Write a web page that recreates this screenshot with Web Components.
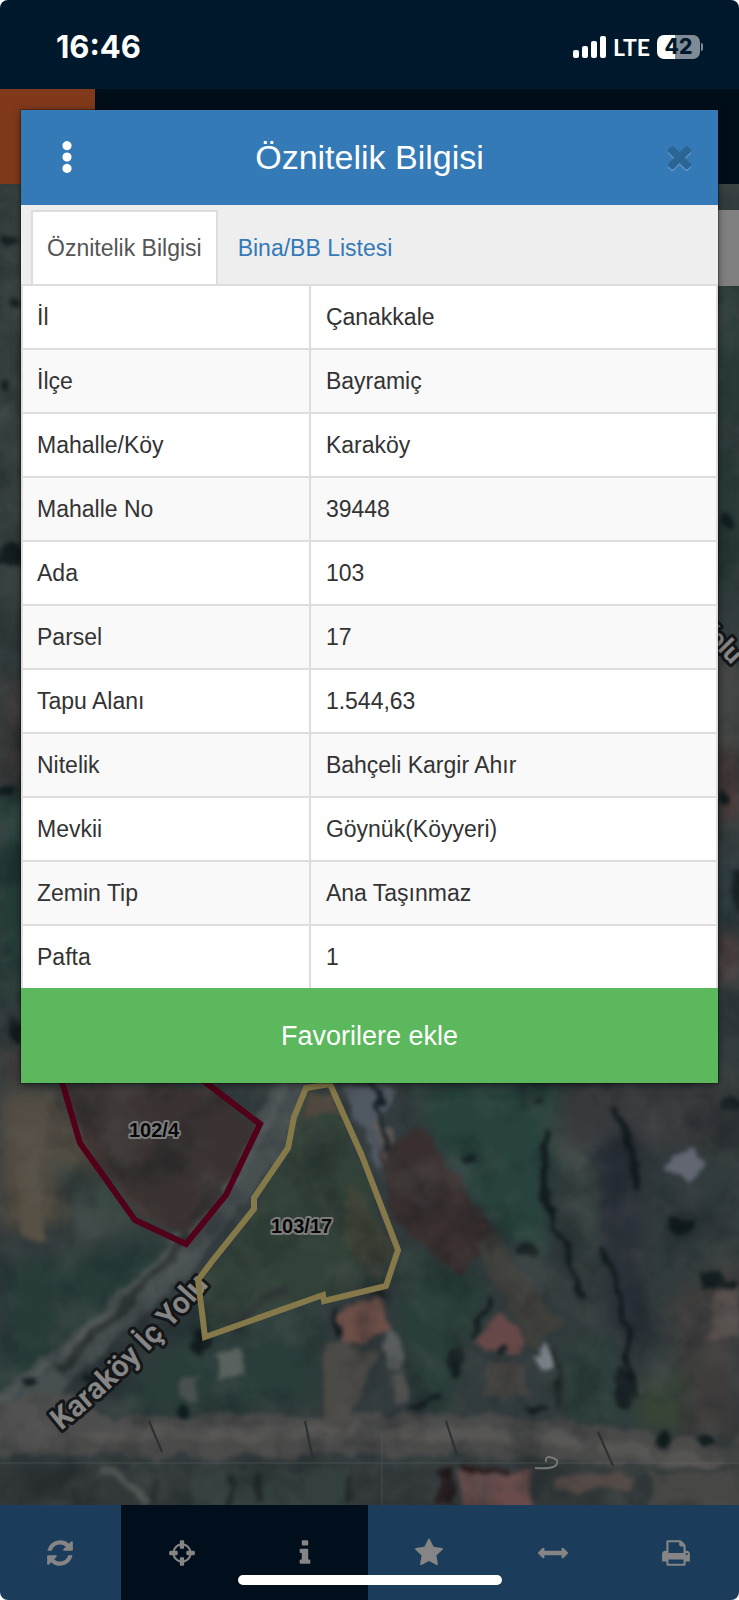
<!DOCTYPE html>
<html lang="tr">
<head>
<meta charset="utf-8">
<meta name="viewport" content="width=device-width, initial-scale=1">
<title>Parsel Sorgu</title>
<style>
  body {
    margin: 0;
    background: #fff;
    font-family: "Liberation Sans", Arial, sans-serif;
    color: #333;
  }
</style>
</head>
<body>
<parcel-app></parcel-app>

<script>
// ============ HELPERS ============
function render(host, html) {
  const template = document.createElement("template")
  template.innerHTML = html
  host.attachShadow({ mode: "open" }).appendChild(template.content.cloneNode(true))
}

const icons = {
  refresh: "M1639 1056q0 5-1 7-64 268-268 434.5t-478 166.5q-146 0-282.5-55t-243.5-157l-129 129q-19 19-45 19t-45-19-19-45v-448q0-26 19-45t45-19h448q26 0 45 19t19 45-19 45l-137 137q71 66 161 102t187 36q134 0 250-65t186-179q11-17 53-117 8-23 30-23h192q13 0 22.5 9.5t9.5 22.5zm25-800v448q0 26-19 45t-45 19h-448q-26 0-45-19t-19-45 19-45l138-138q-148-137-349-137-134 0-250 65t-186 179q-11 17-53 117-8 23-30 23h-199q-13 0-22.5-9.5t-9.5-22.5v-7q65-268 270-434.5t480-166.5q146 0 284 55.5t245 156.5l130-129q19-19 45-19t45 19 19 45z",
  crosshairs: "M1325 1024h-109q-26 0-45-19t-19-45v-128q0-26 19-45t45-19h109q-32-108-112.5-188.5t-188.5-112.5v109q0 26-19 45t-45 19h-128q-26 0-45-19t-19-45v-109q-108 32-188.5 112.5t-112.5 188.5h109q26 0 45 19t19 45v128q0 26-19 45t-45 19h-109q32 108 112.5 188.5t188.5 112.5v-109q0-26 19-45t45-19h128q26 0 45 19t19 45v109q108-32 188.5-112.5t112.5-188.5zm339-192v128q0 26-19 45t-45 19h-143q-37 161-154.5 278.5t-278.5 154.5v143q0 26-19 45t-45 19h-128q-26 0-45-19t-19-45v-143q-161-37-278.5-154.5t-154.5-278.5h-143q-26 0-45-19t-19-45v-128q0-26 19-45t45-19h143q37-161 154.5-278.5t278.5-154.5v-143q0-26 19-45t45-19h128q26 0 45 19t19 45v143q161 37 278.5 154.5t154.5 278.5h143q26 0 45 19t19 45z",
  info: "M1216 1344v128q0 26-19 45t-45 19h-512q-26 0-45-19t-19-45v-128q0-26 19-45t45-19h64v-384h-64q-26 0-45-19t-19-45v-128q0-26 19-45t45-19h384q26 0 45 19t19 45v576h64q26 0 45 19t19 45zm-128-1152v192q0 26-19 45t-45 19h-256q-26 0-45-19t-19-45v-192q0-26 19-45t45-19h256q26 0 45 19t19 45z",
  star: "M1728 647q0 22-26 48l-363 354 86 500q1 7 1 20 0 21-10.5 35.5t-30.5 14.5q-19 0-40-12l-449-236-449 236q-22 12-40 12-21 0-31.5-14.5t-10.5-35.5q0-6 2-20l86-500-364-354q-25-27-25-48 0-37 56-46l502-73 225-455q19-41 49-41t49 41l225 455 502 73q56 9 56 46z",
  arrows: "M1792 896q0 26-19 45l-256 256q-19 19-45 19t-45-19-19-45v-128h-1024v128q0 26-19 45t-45 19-45-19l-256-256q-19-19-19-45t19-45l256-256q19-19 45-19t45 19 19 45v128h1024v-128q0-26 19-45t45-19 45 19l256 256q19 19 19 45z",
  print: "M448 1536h896v-256h-896v256zm0-640h896v-384h-160q-40 0-68-28t-28-68v-160h-640v640zm1152 64q0-26-19-45t-45-19-45 19-19 45 19 45 45 19 45-19 19-45zm128 0v416q0 13-9.5 22.5t-22.5 9.5h-224v160q0 40-28 68t-68 28h-960q-40 0-68-28t-28-68v-160h-224q-13 0-22.5-9.5t-9.5-22.5v-416q0-79 56.5-135.5t135.5-56.5h64v-544q0-40 28-68t68-28h672q40 0 88 20t76 48l152 152q28 28 48 76t20 88v256h64q79 0 135.5 56.5t56.5 135.5z",
  times: "M1490 1322q0 40-28 68l-136 136q-28 28-68 28t-68-28l-294-294-294 294q-28 28-68 28t-68-28l-136-136q-28-28-28-68t28-68l294-294-294-294q-28-28-28-68t28-68l136-136q28-28 68-28t68 28l294 294 294-294q28-28 68-28t68 28l136 136q28 28 28 68t-28 68l-294 294 294 294q28 28 28 68z",
  // three dots on one column
  more: "M896 256a240 240 0 1 0 .1 0zM896 856a240 240 0 1 0 .1 0zM896 1456a240 240 0 1 0 .1 0z"
}

// ============ ICON ============
class AppIcon extends HTMLElement {
  constructor() {
    super()
    const box = this.getAttribute("name") === "more" ? "0 200 1792 1792" : "0 0 1792 1792"
    render(this, `
      <style>
        :host { display: block; width: 30px; height: 30px; }
        svg { display: block; width: 100%; height: 100%; }
      </style>
      <svg viewBox="${box}" fill="currentColor" aria-hidden="true"><path d="${icons[this.getAttribute("name")]}"/></svg>
    `)
  }
}

// ============ STATUS BAR ============
class StatusBar extends HTMLElement {
  constructor() {
    super()
    render(this, `
      <style>
        :host {
          display: flex;
          justify-content: space-between;
          align-items: center;
          box-sizing: border-box;
          height: 89px;
          padding: 5px 36px 0 56px;
          background: #00182b;
          color: #fff;
          font-family: Inter, sans-serif;
        }
        time { font-size: 31px; font-weight: 700; line-height: 36px; }
        .signals { display: flex; align-items: center; gap: 7px; }
        .bars { width: 33px; height: 22px; }
        .network { font: 700 23px/24px Lato, sans-serif; }
        .battery { display: flex; align-items: center; gap: 1px; }
        .level {
          width: 43px;
          height: 24px;
          border-radius: 7px;
          background: linear-gradient(90deg, #fff 42%, #7f8b95 42%);
          color: #00182b;
          font-size: 21px;
          font-weight: 800;
          line-height: 24px;
          text-align: center;
        }
        .cap { width: 2px; height: 8px; border-radius: 0 2px 2px 0; background: #7f8b95; }
      </style>
      <time>16:46</time>
      <div class="signals">
        <svg class="bars" viewBox="0 0 33 22" fill="#fff" aria-hidden="true">
          <rect x="0" y="14" width="6" height="8" rx="2"/>
          <rect x="9" y="10" width="6" height="12" rx="2"/>
          <rect x="18" y="5" width="6" height="17" rx="2"/>
          <rect x="27" y="0" width="6" height="22" rx="2"/>
        </svg>
        <span class="network">LTE</span>
        <span class="battery"><span class="level">42</span><span class="cap"></span></span>
      </div>
    `)
  }
}

// ============ MAP ============
class ParcelMap extends HTMLElement {
  constructor() {
    super()
    render(this, `
      <style>
        :host { display: block; position: relative; overflow: hidden; background: #303c3b; }
        svg { position: absolute; inset: 0; width: 100%; height: 100%; }
        filter { color-interpolation-filters: sRGB; }
        .panel { position: absolute; top: 26px; right: 0; width: 72px; height: 76px; background: #808080; }
        .parcel { fill: none; stroke-width: 6; }
        .parcel-no { font: 700 20px "Liberation Sans", Arial, sans-serif; fill: #080808; stroke: #7c7c7c; stroke-width: 4; paint-order: stroke; stroke-linejoin: round; }
        .road-name { font: 700 30px Roboto, sans-serif; fill: #858585; stroke: #141617; stroke-width: 6; paint-order: stroke; stroke-linejoin: round; }
        .side { font-size: 26px; }
      </style>
      <svg viewBox="0 184 739 1321" preserveAspectRatio="xMidYMax slice" role="img" aria-label="Uydu haritası">
        <defs>
          <filter id="soft" x="-5%" y="-5%" width="110%" height="110%">
            <feTurbulence type="fractalNoise" baseFrequency=".04" numOctaves="3" seed="4" result="n"/>
            <feDisplacementMap in="SourceGraphic" in2="n" scale="18" xChannelSelector="R" yChannelSelector="G"/>
            <feGaussianBlur stdDeviation="2"/>
          </filter>
          <filter id="wide" x="-10%" y="-10%" width="120%" height="120%"><feGaussianBlur stdDeviation="9"/></filter>
          <filter id="grain" x="0" y="0" width="100%" height="100%">
            <feTurbulence type="fractalNoise" baseFrequency=".02" numOctaves="4" seed="11"/>
            <feColorMatrix values="0 0 0 0 .05  0 0 0 0 .08  0 0 0 0 .1  0 3 0 0 -1.4"/>
          </filter>
          <filter id="dust" x="0" y="0" width="100%" height="100%">
            <feTurbulence type="fractalNoise" baseFrequency=".02" numOctaves="4" seed="27"/>
            <feColorMatrix values="0 0 0 0 .42  0 0 0 0 .42  0 0 0 0 .42  3 0 0 0 -1.4"/>
          </filter>
          <path id="road" d="M61 1431Q146 1363 238 1251"/>
        </defs>

        <rect y="184" width="739" height="1321" fill="#323b3d"/>

        <!-- fields -->
        <g filter="url(#wide)">
          <path d="M0 184H30V640H0z" fill="#35423f"/>
          <path d="M0 680H30V800H0z" fill="#3d3b39"/>
          <path d="M0 790H30V1000H0z" fill="#223c38"/>
          <path d="M0 1050H30V1080H0z" fill="#4a4440"/>
          <path d="M0 1265L180 1235 100 1350 0 1420z" fill="#273b39"/>
          <path d="M0 1090L70 1090 110 1180 80 1220 0 1230z" fill="#544d43"/>
          <path d="M50 1160L110 1180 150 1230 80 1240z" fill="#3a4844"/>
          <path d="M110 1410L200 1310 320 1290 320 1400 200 1420z" fill="#2a3d3b"/>
          <path d="M410 1080H560L545 1260 490 1230 430 1130z" fill="#28433e"/>
          <path d="M545 1130L610 1100 650 1250 600 1280z" fill="#3a4643"/>
          <path d="M395 1260L450 1245 490 1290 440 1420 400 1360z" fill="#293e39"/>
          <path d="M565 1350L610 1330 640 1420 560 1425z" fill="#2e403d"/>
          <path d="M560 1080H739V1150H560z" fill="#37393c"/>
          <path d="M590 1140L640 1130 650 1350 610 1340z" fill="#2b3138"/>
          <path d="M670 1300L739 1250V1440L680 1440z" fill="#3f3d3c"/>
          <path d="M638 1380L690 1370 680 1430 640 1430z" fill="#374536"/>
          <path d="M718 280H739V420H718z" fill="#243a36"/>
          <path d="M718 440H739V590H718z" fill="#263a37"/>
          <path d="M718 660H739V750H718z" fill="#4c4b48"/>
          <path d="M718 750H739V820H718z" fill="#5c443f"/>
          <path d="M718 860H739V920H718z" fill="#22343a"/>
          <path d="M718 935H739V980H718z" fill="#5c4543"/>
        </g>

        <g filter="url(#soft)">
          <!-- roads -->
          <path d="M300 1060Q275 1150 215 1215Q120 1330 -20 1425" fill="none" stroke="#474f51" stroke-width="34"/>
          <path d="M292 1060Q265 1150 208 1213Q114 1325 -20 1412" fill="none" stroke="#565c5d" stroke-width="4"/>
          <path d="M-20 1436H400Q600 1430 760 1480" fill="none" stroke="#4a4a49" stroke-width="40"/>
          <path d="M-20 1433H420Q600 1434 760 1478" fill="none" stroke="#565553" stroke-width="14"/>
          <path d="M0 1400L60 1390 130 1425 0 1460z" fill="#4c4d4c"/>
          <path d="M700 1505L745 1420V1510z" fill="#4a4a48"/>
          <!-- ploughed strips -->
          <path d="M382 1150L420 1125 500 1240 460 1275 395 1220z" fill="#392f2f"/>
          <path d="M475 1245L495 1235 562 1325 535 1350z" fill="#3f3f3b"/>
          <path d="M65 1085H210L255 1125 225 1190 186 1236 138 1214 85 1140z" fill="#3a3332"/>
          <path d="M70 1085Q95 1170 150 1220" fill="none" stroke="#4a3a37" stroke-width="4"/>
          <path d="M305 1090L330 1090 390 1245 380 1280 210 1330 204 1280 260 1210z" fill="#324238"/>
          <path d="M352 1180L392 1245 375 1278 340 1240z" fill="#404438"/>
          <path d="M306 1094L330 1094 338 1115 300 1120z" fill="#50483f"/>
          <path d="M340 1085H390L380 1170z" fill="#505862"/>
          <path d="M370 1120L395 1125 390 1160z" fill="#605a58"/>
          <path d="M18 1170L38 1150 45 1240 20 1240z" fill="#575045"/>
          <!-- roofs -->
          <path d="M335 1310L380 1295 388 1335 345 1345z" fill="#6d4f48"/>
          <path d="M470 1340L500 1310 528 1340 515 1358z" fill="#674848"/>
          <path d="M530 1358L545 1345 556 1360 543 1370z" fill="#7e878d"/>
          <path d="M665 1165L690 1145 706 1165 690 1185z" fill="#616671"/>
          <path d="M215 1355L238 1350 248 1372 218 1378z" fill="#58615d"/>
          <path d="M178 1380L200 1375 198 1400 180 1400z" fill="#4a5052"/>
          <path d="M715 1295L739 1285V1335L705 1340z" fill="#584f4c"/>
          <path d="M325 1340L380 1350 345 1430 322 1425z" fill="#4c4a46"/>
          <path d="M385 1330L405 1340 400 1370 385 1370z" fill="#5a5d5e"/>
          <path d="M388 1375L408 1370 412 1400 395 1405z" fill="#525150"/>
          <path d="M490 1360L525 1370 530 1395 480 1400z" fill="#444240"/>
          <!-- southern yards -->
          <path d="M-20 1466H760V1520H-20z" fill="#313738"/>
          <path d="M190 1470H350V1515H190z" fill="#33403d"/>
          <path d="M460 1472H532V1520H460z" fill="#684b4a"/>
          <path d="M465 1464H510V1473H465z" fill="#2a1b1c"/>
          <path d="M555 1475H630V1490H555z" fill="#524845"/>
          <path d="M650 1470H760V1520H650z" fill="#474845"/>
          <path d="M100 1472Q130 1478 150 1505" fill="none" stroke="#505452" stroke-width="7"/>
          <!-- hedges, shadows -->
          <g fill="none" stroke="#121b1e" stroke-width="6">
            <path d="M549 1130Q535 1165 550 1210T585 1300"/>
            <path d="M618 1105L640 1190"/>
            <path d="M602 1245L625 1320 635 1400"/>
            <path d="M365 1080Q385 1100 390 1150" stroke-width="4"/>
            <path d="M493 1298L470 1335" stroke-width="4"/>
            <path d="M700 1290L735 1285" stroke-width="4"/>
            <path d="M555 1350L558 1415" stroke="#202a2a"/>
            <path d="M440 1395L410 1410M530 1405L550 1412" stroke-width="4"/>
            <path d="M445 1470V1505" stroke="#1f1719" stroke-width="14"/>
            <path d="M154 1475V1505M230 1475V1505M260 1475V1505M348 1475V1505" stroke="#222a2b"/>
            <path d="M335 1305L342 1335M385 1300L375 1290" stroke-width="5"/>
            <path d="M190 1235L60 1370M285 1285L230 1330" stroke="#2b3233" stroke-width="8"/>
          </g>
          <g fill="#111c1e">
            <ellipse cx="10" cy="240" rx="8" ry="5"/><ellipse cx="15" cy="305" rx="8" ry="6"/>
            <ellipse cx="6" cy="385" rx="4" ry="5"/><ellipse cx="12" cy="555" rx="11" ry="12"/>
            <ellipse cx="6" cy="790" rx="9" ry="7"/><ellipse cx="16" cy="1030" rx="7" ry="14"/>
            <ellipse cx="728" cy="520" rx="9" ry="7"/><ellipse cx="724" cy="800" rx="8" ry="8"/>
            <ellipse cx="737" cy="890" rx="7" ry="20"/><ellipse cx="730" cy="1105" rx="11" ry="9"/>
            <ellipse cx="470" cy="1163" rx="7" ry="5"/><ellipse cx="541" cy="1104" rx="6" ry="4"/>
            <ellipse cx="527" cy="1250" rx="10" ry="7"/><ellipse cx="455" cy="1362" rx="9" ry="12"/>
            <ellipse cx="503" cy="1350" rx="6" ry="5"/><ellipse cx="625" cy="1390" rx="9" ry="22"/>
            <ellipse cx="663" cy="1437" rx="8" ry="9"/><ellipse cx="703" cy="1440" rx="10" ry="5"/>
            <ellipse cx="680" cy="1225" rx="14" ry="8"/><ellipse cx="710" cy="1280" rx="12" ry="12"/>
            <ellipse cx="200" cy="1340" rx="9" ry="12"/><ellipse cx="183" cy="1410" rx="8" ry="5"/>
            <ellipse cx="92" cy="1380" rx="7" ry="6"/><ellipse cx="30" cy="1382" rx="8" ry="5"/>
          </g>
        </g>

        <rect y="184" width="739" height="1321" filter="url(#grain)" opacity=".3"/>
        <rect y="184" width="739" height="1321" filter="url(#dust)" opacity=".2"/>
        <path d="M0 1463H739M382 1435V1505" stroke="#6a6a6a" opacity=".4"/>
        <path d="M149 1421L162 1452M305 1421L313 1460M446 1421L457 1455M598 1432L613 1466" stroke="#2c3030" stroke-width="2"/>
        <path d="M535 1468Q560 1470 557 1460 545 1453 546 1462" fill="none" stroke="#777773" stroke-width="2"/>

        <!-- labels and parcels -->
        <text class="road-name"><textPath href="#road">Karaköy İç Yolu</textPath></text>
        <text class="road-name side" transform="translate(696 628) rotate(46)">Yolu</text>
        <path class="parcel" stroke="#52001a" d="M60 1075L80 1143 135 1220 186 1244 226 1195 260 1124 205 1082 150 1040z"/>
        <path class="parcel" stroke="#857849" d="M306 1088L330 1084 362 1156 398 1250 386 1286 324 1301 323 1295 205 1337 198 1280 213 1260 254 1209 254 1198 288 1148 294 1117z"/>
        <text class="parcel-no" x="129" y="1137">102/4</text>
        <text class="parcel-no" x="271" y="1233">103/17</text>
      </svg>
      <div class="panel"></div>
    `)
  }
}

// ============ BOTTOM TOOLBAR ============
class ToolBar extends HTMLElement {
  constructor() {
    super()
    render(this, `
      <style>
        :host { display: grid; grid-template-columns: 121px repeat(5, 1fr); height: 95px; color: #858585; background: #1b3d5b; }
        button { display: grid; place-items: center; padding: 0 2px 0 0; border: 0; color: inherit; background: none; }
        .active { background: #000f1b; }
      </style>
      <button aria-label="Yenile"><app-icon name="refresh"></app-icon></button>
      <button class="active" aria-label="Konum"><app-icon name="crosshairs"></app-icon></button>
      <button class="active" aria-label="Bilgi"><app-icon name="info"></app-icon></button>
      <button aria-label="Favoriler"><app-icon name="star"></app-icon></button>
      <button aria-label="Ölçüm"><app-icon name="arrows"></app-icon></button>
      <button aria-label="Yazdır"><app-icon name="print"></app-icon></button>
    `)
  }
}

// ============ ATTRIBUTE TABLE ============
class AttributeTable extends HTMLElement {
  constructor() {
    super()
    const rows = [
      ["İl", "Çanakkale"],
      ["İlçe", "Bayramiç"],
      ["Mahalle/Köy", "Karaköy"],
      ["Mahalle No", "39448"],
      ["Ada", "103"],
      ["Parsel", "17"],
      ["Tapu Alanı", "1.544,63"],
      ["Nitelik", "Bahçeli Kargir Ahır"],
      ["Mevkii", "Göynük(Köyyeri)"],
      ["Zemin Tip", "Ana Taşınmaz"],
      ["Pafta", "1"]
    ]
    render(this, `
      <style>
        :host { display: block; background: #fff; }
        table { width: 100%; table-layout: fixed; border-spacing: 0; font-size: 23px; line-height: 32px; }
        th, td { padding: 15px 14px; border-top: 2px solid #ddd; border-left: 2px solid #ddd; font-weight: 400; text-align: left; }
        th { width: 37%; }
        td { padding-left: 15px; border-right: 2px solid #ddd; }
        tr:nth-child(even) { background: #f9f9f9; }
      </style>
      <table>
        <tbody>${rows.map(([name, value]) => `<tr><th scope="row">${name}</th><td>${value}</td></tr>`).join("")}</tbody>
      </table>
    `)
  }
}

// ============ DIALOG ============
class InfoDialog extends HTMLElement {
  constructor() {
    super()
    render(this, `
      <style>
        :host { display: block; background: #fff; box-shadow: 0 0 0 1px rgba(0, 0, 0, .25), 0 2px 8px rgba(0, 0, 0, .5); }
        button { padding: 0; border: 0; background: none; font-family: inherit; }
        header { display: grid; grid-template-columns: 92px 1fr 92px; align-items: center; height: 95px; background: #337ab7; color: #fff; }
        h1 { margin: 0; padding-bottom: 2px; font-size: 34px; font-weight: 400; line-height: 40px; text-align: center; }
        .menu, .close { display: grid; place-items: center; box-sizing: border-box; height: 95px; padding-bottom: 2px; }
        .menu { color: #fff; }
        .menu app-icon { width: 34px; height: 34px; }
        .close { width: 78px; justify-self: end; color: #2a6595; filter: drop-shadow(0 2px 0 #5a91c3); }
        .close app-icon { width: 35px; height: 35px; }
        nav { display: flex; align-items: flex-end; box-sizing: border-box; height: 79px; padding: 0 10px; background: #eee; }
        nav button { box-sizing: border-box; height: 74px; padding: 0 14px; border: solid transparent; border-width: 2px 2px 0; color: #337ab7; font-size: 23px; line-height: 32px; }
        nav .selected { margin-right: 4px; border-color: #ddd; background: #fff; color: #555; }
        .add { display: block; width: 100%; height: 95px; background: #5cb85c; color: #fff; font-size: 27px; line-height: 32px; }
      </style>
      <header>
        <button class="menu" aria-label="Menü"><app-icon name="more"></app-icon></button>
        <h1>Öznitelik Bilgisi</h1>
        <button class="close" aria-label="Kapat"><app-icon name="times"></app-icon></button>
      </header>
      <nav role="tablist">
        <button class="selected" role="tab" aria-selected="true">Öznitelik Bilgisi</button>
        <button role="tab" aria-selected="false">Bina/BB Listesi</button>
      </nav>
      <slot></slot>
      <button class="add">Favorilere ekle</button>
    `)
  }
}

// ============ APP ============
class ParcelApp extends HTMLElement {
  constructor() {
    super()
    render(this, `
      <style>
        :host {
          display: grid;
          grid-template-rows: auto auto 1fr auto;
          position: relative;
          min-height: 100vh;
          border-radius: 8px;
          overflow: hidden;
        }
        .topbar { height: 95px; background: #000e1a; }
        .logo { width: 95px; height: 100%; background: #80391b; }
        parcel-map { min-height: 904px; }
        info-dialog { position: absolute; top: 110px; left: 21px; right: 21px; }
        .home { position: absolute; left: 50%; bottom: 15px; width: 264px; height: 10px; margin-left: -132px; border-radius: 5px; background: #fff; }
      </style>
      <status-bar></status-bar>
      <div class="topbar"><div class="logo"></div></div>
      <parcel-map></parcel-map>
      <tool-bar></tool-bar>
      <info-dialog><attribute-table></attribute-table></info-dialog>
      <div class="home"></div>
    `)
  }
}

customElements.define("app-icon", AppIcon)
customElements.define("status-bar", StatusBar)
customElements.define("parcel-map", ParcelMap)
customElements.define("tool-bar", ToolBar)
customElements.define("attribute-table", AttributeTable)
customElements.define("info-dialog", InfoDialog)
customElements.define("parcel-app", ParcelApp)
</script>
</body>
</html>
